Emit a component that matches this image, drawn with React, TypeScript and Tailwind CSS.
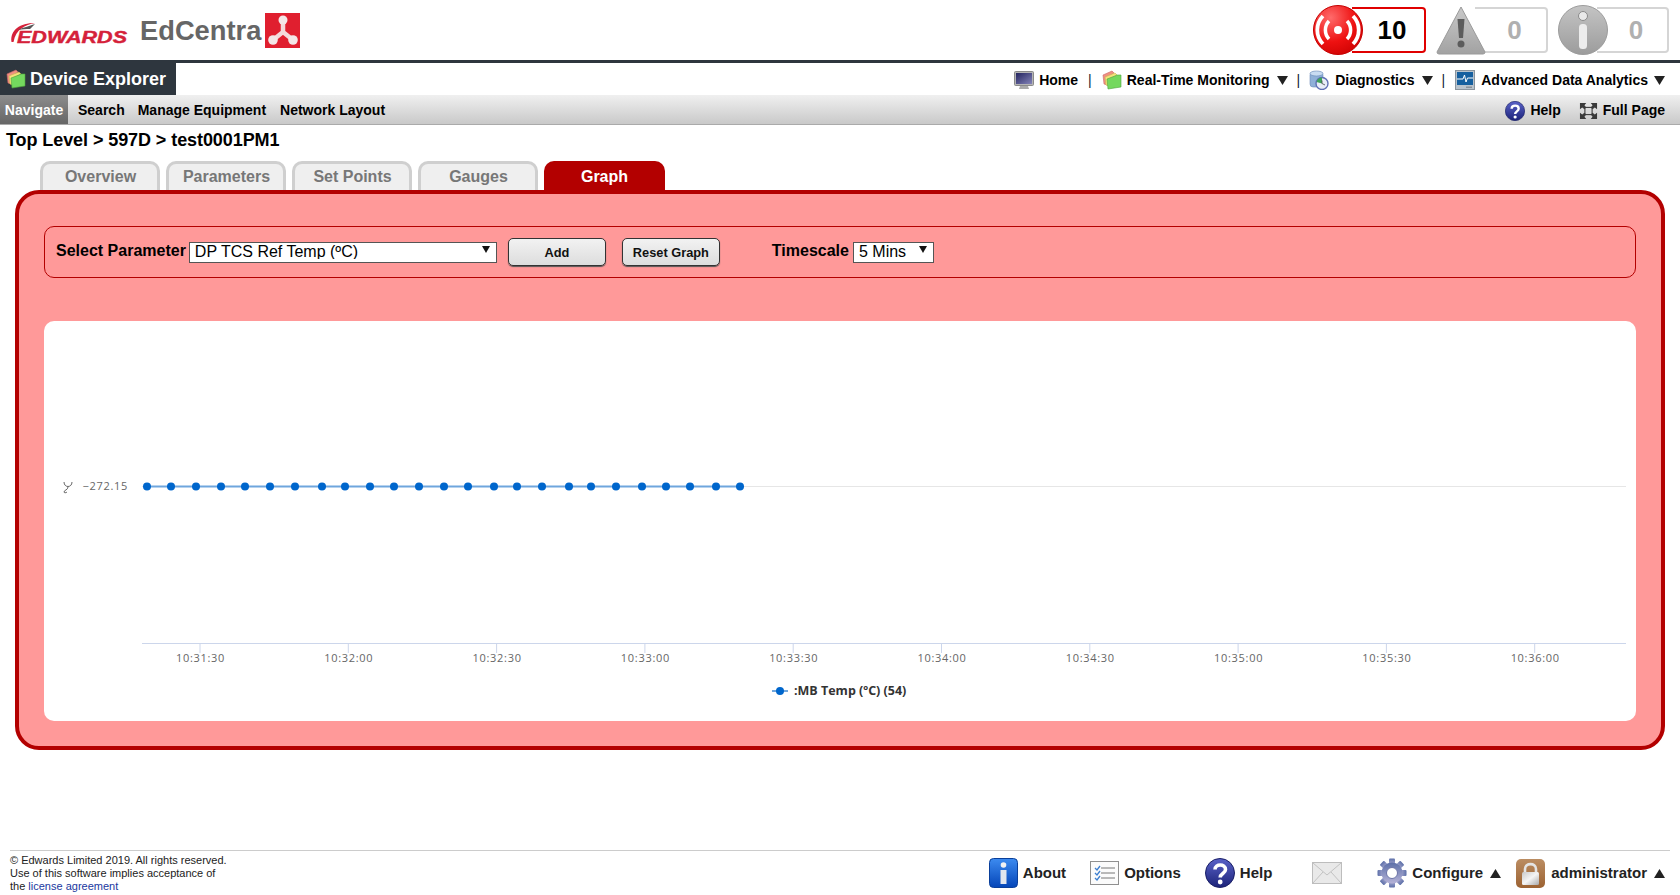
import React from 'react';

const pointXs = [147, 171, 196, 221, 245, 270, 295, 322, 345, 370, 394, 419, 444, 468, 494, 517, 542, 569, 591, 616, 642, 666, 690, 716, 740];
const ticks = ['10:31:30', '10:32:00', '10:32:30', '10:33:00', '10:33:30', '10:34:00', '10:34:30', '10:35:00', '10:35:30', '10:36:00'];
const tabs = ['Overview', 'Parameters', 'Set Points', 'Gauges', 'Graph'];

function Arrow({ up = false }: { up?: boolean }) {
  return (
    <svg width="11" height="9" viewBox="0 0 11 9" className="shrink-0">
      <polygon points={up ? '0,9 11,9 5.5,0' : '0,0 11,0 5.5,9'} fill="#222" />
    </svg>
  );
}

function FoldersIcon({ size = 20 }: { size?: number }) {
  return (
    <svg width={size} height={size} viewBox="0 0 20 20" className="shrink-0">
      <path d="M1 5 L10 1 L12 3 L5 8 L5 15 L2 14 Z" fill="#ef8f80" stroke="#c66" strokeWidth="0.6" />
      <path d="M3 7 L13 3 L15 5 L7 9 L7 16 L4 15 Z" fill="#f3e27c" stroke="#c8b450" strokeWidth="0.6" />
      <path d="M5 9 L13 6 L15 5 L19 5 L19 17 L6 19 Z" fill="#74d85e" stroke="#4ea53c" strokeWidth="0.6" />
    </svg>
  );
}

function MonitorIcon() {
  return (
    <svg width="20" height="20" viewBox="0 0 20 20" className="shrink-0">
      <defs>
        <linearGradient id="mon" x1="0" y1="0" x2="1" y2="1">
          <stop offset="0" stopColor="#23235f" />
          <stop offset="1" stopColor="#8484b8" />
        </linearGradient>
      </defs>
      <rect x="0.5" y="1.5" width="19" height="14" rx="1" fill="#b5b5b5" stroke="#8a8a8a" />
      <rect x="2" y="3" width="16" height="11" fill="url(#mon)" />
      <path d="M6 16 H14 L15 19 H5 Z" fill="#aaa" />
    </svg>
  );
}

function DiagIcon() {
  return (
    <svg width="20" height="20" viewBox="0 0 20 20" className="shrink-0">
      <rect x="1" y="2" width="13" height="15" rx="3" fill="#8fb0d8" stroke="#6c8cb8" strokeWidth="0.6" />
      <ellipse cx="7.5" cy="3.5" rx="6.5" ry="2.5" fill="#c9dcf2" stroke="#6c8cb8" strokeWidth="0.6" />
      <circle cx="13" cy="13.5" r="6" fill="#e8edf7" stroke="#5f6fb5" strokeWidth="1.4" />
      <path d="M7.5 12 A6 6 0 0 1 13 7.5 L13 13.5 Z" fill="#3fa35a" />
      <path d="M13 10.5 V13.5 L16 15" stroke="#444" strokeWidth="0.8" fill="none" />
    </svg>
  );
}

function AnalyticsIcon() {
  return (
    <svg width="20" height="20" viewBox="0 0 20 20" className="shrink-0">
      <rect x="0.5" y="0.5" width="19" height="19" fill="#b9c3cc" stroke="#8b959e" />
      <rect x="2" y="2" width="16" height="13" fill="#16609f" />
      <path d="M2 9 H8 L9.5 5 L11 12 L12.5 8 H18" stroke="#fff" strokeWidth="1" fill="none" />
      <rect x="11" y="16.5" width="6" height="1.5" fill="#88929b" />
    </svg>
  );
}

function HelpIcon({ size = 20 }: { size?: number }) {
  return (
    <svg width={size} height={size} viewBox="0 0 30 30" className="shrink-0">
      <defs>
        <linearGradient id={`hlp${size}`} x1="0" y1="0" x2="0" y2="1">
          <stop offset="0" stopColor="#5a62c8" />
          <stop offset="1" stopColor="#1c2379" />
        </linearGradient>
      </defs>
      <circle cx="15" cy="15" r="14.5" fill={`url(#hlp${size})`} stroke="#1a1f66" />
      <path d="M10 11.5 C10 5.5 20.5 5.5 20.5 11.5 C20.5 15.5 15.2 15.5 15.2 19.5" fill="none" stroke="#fff" strokeWidth="3.6" />
      <circle cx="15.2" cy="24" r="2.4" fill="#fff" />
    </svg>
  );
}

function FullPageIcon() {
  return (
    <svg width="19" height="18" viewBox="0 0 21 20" className="shrink-0">
      <path d="M1 1 H8 L6 3.5 L8 6 L6 8 L3.5 6 L1 8 Z M20 1 H13 L15 3.5 L13 6 L15 8 L17.5 6 L20 8 Z M1 19 H8 L6 16.5 L8 14 L6 12 L3.5 14 L1 12 Z M20 19 H13 L15 16.5 L13 14 L15 12 L17.5 14 L20 12 Z" fill="#3a3a3a" />
      <rect x="6.5" y="6" width="8" height="8" fill="none" stroke="#3a3a3a" strokeWidth="1.2" />
    </svg>
  );
}

function AlarmIcon() {
  return (
    <svg width="50" height="50" viewBox="0 0 50 50">
      <defs>
        <radialGradient id="alarm" cx="0.35" cy="0.25" r="0.9">
          <stop offset="0" stopColor="#ff6b6b" />
          <stop offset="0.55" stopColor="#ee1111" />
          <stop offset="1" stopColor="#c80000" />
        </radialGradient>
      </defs>
      <circle cx="25" cy="25" r="24.5" fill="url(#alarm)" stroke="#c40000" />
      <circle cx="25" cy="25" r="4" fill="#fff" />
      <path d="M16 16 A13 13 0 0 0 16 34 M34 16 A13 13 0 0 1 34 34" fill="none" stroke="#fff" strokeWidth="3.5" />
      <path d="M10 11 A20 20 0 0 0 10 39 M40 11 A20 20 0 0 1 40 39" fill="none" stroke="#fff" strokeWidth="3.8" />
    </svg>
  );
}

function WarnIcon() {
  return (
    <svg width="50" height="50" viewBox="0 0 50 50">
      <defs>
        <linearGradient id="warn" x1="0" y1="0" x2="0" y2="1">
          <stop offset="0" stopColor="#c9c9c9" />
          <stop offset="1" stopColor="#a2a2a2" />
        </linearGradient>
      </defs>
      <path d="M25 2 L49 47 Q49 49 47 49 H3 Q1 49 1 47 Z" fill="url(#warn)" stroke="#9a9a9a" strokeLinejoin="round" />
      <path d="M21.5 14 H28.5 L27 33 H23 Z" fill="#5c5c5c" />
      <circle cx="25" cy="39" r="3.5" fill="#5c5c5c" />
    </svg>
  );
}

function InfoIcon() {
  return (
    <svg width="50" height="50" viewBox="0 0 50 50">
      <defs>
        <linearGradient id="info" x1="0" y1="0" x2="0" y2="1">
          <stop offset="0" stopColor="#c4c4c4" />
          <stop offset="1" stopColor="#9c9c9c" />
        </linearGradient>
      </defs>
      <circle cx="25" cy="25" r="24.5" fill="url(#info)" stroke="#9c9c9c" />
      <circle cx="25" cy="11" r="4.5" fill="#e9e9e9" stroke="#8a8a8a" />
      <rect x="21" y="19" width="8" height="25" rx="3.5" fill="#ececec" />
    </svg>
  );
}

function AboutIcon() {
  return (
    <svg width="29" height="30" viewBox="0 0 29 30" className="shrink-0">
      <defs>
        <linearGradient id="about" x1="0" y1="0" x2="0" y2="1">
          <stop offset="0" stopColor="#3d8bf0" />
          <stop offset="1" stopColor="#0445b8" />
        </linearGradient>
      </defs>
      <rect x="0.5" y="0.5" width="28" height="29" rx="4" fill="url(#about)" stroke="#0a3f9a" />
      <circle cx="14.5" cy="7" r="2.8" fill="#f2f2f2" />
      <rect x="11.5" y="12" width="6" height="14" fill="#e2e6ee" />
    </svg>
  );
}

function OptionsIcon() {
  return (
    <svg width="29" height="24" viewBox="0 0 29 24" className="shrink-0">
      <rect x="0.5" y="0.5" width="28" height="23" fill="#fbfbfb" stroke="#8f8f8f" />
      {[7, 12, 17].map((y) => (
        <g key={y}>
          <path d={`M5 ${y} L7 ${y + 2} L10 ${y - 2}`} fill="none" stroke="#3d7fd0" strokeWidth="1.3" />
          <line x1="11" y1={y} x2="25" y2={y} stroke="#777" />
        </g>
      ))}
    </svg>
  );
}

function MailIcon() {
  return (
    <svg width="30" height="22" viewBox="0 0 30 22" className="shrink-0">
      <rect x="0.5" y="0.5" width="29" height="21" fill="#e9e9e9" stroke="#bdbdbd" />
      <path d="M1 1 L15 13 L29 1 M1 21 L11 10 M29 21 L19 10" fill="none" stroke="#c2c2c2" />
    </svg>
  );
}

function GearIcon() {
  return (
    <svg width="30" height="30" viewBox="0 0 30 30" className="shrink-0">
      <defs>
        <linearGradient id="gear" x1="0" y1="0" x2="0" y2="1">
          <stop offset="0" stopColor="#5c6fa8" />
          <stop offset="1" stopColor="#b6b3d8" />
        </linearGradient>
      </defs>
      <g fill="url(#gear)">
        {[0, 45, 90, 135, 180, 225, 270, 315].map((a) => (
          <rect key={a} x="12" y="0.5" width="6" height="7" rx="1" transform={`rotate(${a} 15 15)`} />
        ))}
        <circle cx="15" cy="15" r="10.5" />
      </g>
      <circle cx="15" cy="15" r="5.5" fill="#fff" stroke="#6c74a8" />
    </svg>
  );
}

function LockIcon() {
  return (
    <svg width="29" height="29" viewBox="0 0 29 29" className="shrink-0">
      <defs>
        <linearGradient id="lockbg" x1="0" y1="0" x2="0" y2="1">
          <stop offset="0" stopColor="#bb8d62" />
          <stop offset="1" stopColor="#9c6232" />
        </linearGradient>
        <linearGradient id="lockbody" x1="0" y1="0" x2="1" y2="1">
          <stop offset="0" stopColor="#c9c9c9" />
          <stop offset="0.5" stopColor="#f5f5f5" />
          <stop offset="1" stopColor="#a9a9a9" />
        </linearGradient>
      </defs>
      <rect width="29" height="29" rx="5" fill="url(#lockbg)" />
      <path d="M9 14 V10 C9 3.5 20 3.5 20 10 V14" fill="none" stroke="#e4e4e4" strokeWidth="2.6" />
      <rect x="6" y="13" width="17" height="13" rx="1.5" fill="url(#lockbody)" />
    </svg>
  );
}

function EdwardsLogo() {
  return (
    <svg width="118" height="28" viewBox="0 0 118 28" className="shrink-0">
      <path d="M1.5 25 C0 13 10 6 25 6 C15 8 6 12 3.5 25 Z" fill="#d5213a" />
      <path d="M8 13 C14 10 20 9 25 7 L20 12 C16 12 12 12 8 13 Z" fill="#555" />
      <text x="7" y="25.5" textLength="110" lengthAdjust="spacingAndGlyphs" stroke="#d5213a" strokeWidth="0.4" className="font-['Liberation_Sans'] text-[16px] font-bold italic fill-[#d5213a]">
        EDWARDS
      </text>
    </svg>
  );
}

function NodeLogo() {
  return (
    <svg width="35" height="35" viewBox="0 0 35 35" className="shrink-0">
      <rect width="35" height="35" fill="#e01f2f" />
      <path d="M18 7 V19 L8 27 M18 19 L28 27" stroke="#f4d9db" strokeWidth="4.5" fill="none" />
      <circle cx="18" cy="7" r="4.5" fill="#f4e6e7" />
      <circle cx="8" cy="27" r="4.8" fill="#f4e6e7" />
      <circle cx="28" cy="27" r="4.8" fill="#f4e6e7" />
    </svg>
  );
}

function GraphChart() {
  const y = 165.5;
  return (
    <svg width="1592" height="400" viewBox="0 0 1592 400" className="block">
      <line x1="98" y1={y} x2="1582" y2={y} stroke="#e6e6e6" />
      <line x1="98" y1="322.5" x2="1582" y2="322.5" stroke="#ccd6eb" />
      {ticks.map((t, i) => {
        const x = 156 + i * 148.3;
        return (
          <g key={t}>
            <line x1={x} y1="322" x2={x} y2="332" stroke="#ccd6eb" />
            <text x={x + 0.5} y="341" textAnchor="middle" className="font-['Open_Sans'] text-[11px] tracking-[0.7px] fill-[#666666]">
              {t}
            </text>
          </g>
        );
      })}
      <path d="M20 161 C20 167 28 167 28 161 M24 166 C24 169 20 169 20 171 C20 172 22 172 23 171" fill="none" stroke="#666" strokeWidth="1" />
      <text x="84" y="169" textAnchor="end" className="font-['Open_Sans'] text-[11px] tracking-[0.7px] fill-[#666666]">
        −272.15
      </text>
      <line x1={pointXs[0] - 44} y1={y} x2={pointXs[24] - 44} y2={y} stroke="#6fa6dd" strokeWidth="2" />
      {pointXs.map((x) => (
        <circle key={x} cx={x - 44} cy={y} r="4" fill="#0066cc" />
      ))}
      <line x1="728" y1="370" x2="744" y2="370" stroke="#6fa6dd" strokeWidth="2" />
      <circle cx="736" cy="370" r="4" fill="#0066cc" />
      <text x="750" y="374" className="font-['Open_Sans'] text-[12.5px] font-bold fill-[#333333]">
        :MB Temp (ºC) (54)
      </text>
    </svg>
  );
}

function SelectBox({ value, className }: { value: string; className: string }) {
  return (
    <div className={`relative mb-[3px] h-[21px] ${className}`}>
      <select
        defaultValue={value}
        className="h-full w-full appearance-none border border-[#555] bg-white pb-[3px] pl-[5px] text-[16px] leading-[17px] text-black outline-none"
      >
        <option>{value}</option>
      </select>
      <svg width="8" height="7" viewBox="0 0 8 7" className="pointer-events-none absolute right-[7px] top-[6px]">
        <polygon points="0,0 8,0 4,7" fill="#111" />
      </svg>
    </div>
  );
}

function NavButton({ label, className }: { label: string; className: string }) {
  return (
    <button className={`h-[28px] rounded-[5px] border border-[#333] bg-linear-to-b from-[#f2f2f2] to-[#dddddd] pt-[2px] text-[12.8px] font-bold text-[#111] shadow-[0_1px_1px_#555] ${className}`}>
      {label}
    </button>
  );
}

function AlertCount({ icon, count, active, width }: { icon: React.ReactNode; count: string; active?: boolean; width: string }) {
  return (
    <div className="flex items-center">
      <div className="relative z-10 h-[50px]">{icon}</div>
      <div
        className={`-ml-[11px] flex h-[46px] items-center justify-center rounded-r-[4px] border-2 border-l-0 pl-[8px] text-[26px] font-bold ${width} ${
          active ? 'border-[#e00000] text-black' : 'border-[#d5d5d5] text-[#b0b0b0]'
        }`}
      >
        {count}
      </div>
    </div>
  );
}

export default function App() {
  return (
    <div className="flex h-[895px] flex-col overflow-hidden bg-white font-['Liberation_Sans',sans-serif] text-black">
      {/* Logo and alarm counters */}
      <div className="flex h-[60px] items-start justify-between pl-[10px] pr-[11px]">
        <div className="flex items-center pt-[13px]">
          <EdwardsLogo />
          <span className="ml-[12px] text-[27.3px] font-bold leading-[34px] text-[#666]">EdCentra</span>
          <div className="ml-[4px]">
            <NodeLogo />
          </div>
        </div>
        <div className="flex gap-[10px] pt-[5px]">
          <AlertCount icon={<AlarmIcon />} count="10" active width="w-[74px]" />
          <AlertCount icon={<WarnIcon />} count="0" width="w-[73px]" />
          <AlertCount icon={<InfoIcon />} count="0" width="w-[72px]" />
        </div>
      </div>

      {/* Module bar */}
      <div className="flex h-[35px] items-start justify-between border-t-[3px] border-[#2e363e]">
        <div className="flex h-[32px] w-[176px] items-center gap-[4px] bg-[#2e363e] pl-[6px] text-[18px] font-bold text-white">
          <FoldersIcon />
          <span>Device Explorer</span>
        </div>
        <div className="flex h-[32px] items-center pr-[15px] pt-[2px] text-[14px] font-bold">
          <MonitorIcon />
          <span className="ml-[5px]">Home</span>
          <span className="mx-[10px] font-normal text-[#123]">|</span>
          <FoldersIcon />
          <span className="ml-[5px]">Real-Time Monitoring</span>
          <span className="ml-[7px]"><Arrow /></span>
          <span className="mx-[9px] font-normal text-[#123]">|</span>
          <DiagIcon />
          <span className="ml-[6px]">Diagnostics</span>
          <span className="ml-[7px]"><Arrow /></span>
          <span className="ml-[9px] mr-[10px] font-normal text-[#123]">|</span>
          <AnalyticsIcon />
          <span className="ml-[6px]">Advanced Data Analytics</span>
          <span className="ml-[6px]"><Arrow /></span>
        </div>
      </div>

      {/* Sub navigation */}
      <div className="flex h-[30px] items-stretch justify-between border-b border-[#aaa] bg-linear-to-b from-[#f0f0f0] to-[#c9c9c9] text-[14px] font-bold">
        <div className="flex items-center">
          <div className="flex h-full w-[68px] items-center justify-center bg-linear-to-b from-[#8d8d8d] to-[#666] pt-[2px] text-white">Navigate</div>
          <span className="ml-[10px] mt-[2px]">Search</span>
          <span className="ml-[13px] mt-[2px]">Manage Equipment</span>
          <span className="ml-[14px] mt-[2px]">Network Layout</span>
        </div>
        <div className="flex items-center pr-[15px] pt-[2px]">
          <HelpIcon />
          <span className="ml-[5px]">Help</span>
          <span className="ml-[18px]"><FullPageIcon /></span>
          <span className="ml-[5px]">Full Page</span>
        </div>
      </div>

      {/* Breadcrumb */}
      <div className="h-[36px] pl-[6px] pt-[5px] text-[18px] font-bold leading-[21px] tracking-[-0.08px]">Top Level &gt; 597D &gt; test0001PM1</div>

      {/* Tabs */}
      <div className="flex h-[29px] gap-[6px] pl-[40px]">
        {tabs.map((tab) =>
          tab === 'Graph' ? (
            <div key={tab} className="flex w-[121px] items-center justify-center rounded-t-[10px] bg-[#b30000] pt-[2px] text-[16px] font-bold text-white">{tab}</div>
          ) : (
            <div key={tab} className="flex w-[120px] items-center justify-center rounded-t-[10px] border-[3px] border-b-0 border-[#cfcfcf] bg-[#efefef] pl-[1px] text-[16px] font-bold text-[#777]">{tab}</div>
          ),
        )}
      </div>

      {/* Graph panel */}
      <div className="mx-[15px] h-[560px] rounded-[24px] border-4 border-[#b30000] bg-[#ff9999] px-[25px] pb-[25px] pt-[32px]">
        <div className="flex h-[52px] items-center rounded-[10px] border border-[#b30000] pl-[11px]">
          <span className="mb-[2px] text-[16px] font-bold">Select Parameter</span>
          <SelectBox value="DP TCS Ref Temp (ºC)" className="ml-[3px] w-[308px]" />
          <NavButton label="Add" className="ml-[11px] w-[98px]" />
          <NavButton label="Reset Graph" className="ml-[16px] w-[98px]" />
          <span className="mb-[2px] ml-[52px] text-[16px] font-bold">Timescale</span>
          <SelectBox value="5 Mins" className="ml-[4px] w-[81px]" />
        </div>
        <div className="mt-[43px] h-[400px] overflow-hidden rounded-[10px] bg-white">
          <GraphChart />
        </div>
      </div>

      {/* Footer */}
      <div className="mx-[10px] mt-auto flex h-[45px] items-start justify-between border-t border-[#ccc]">
        <div className="pt-[3px] text-[11px] leading-[13px] text-[#222]">
          <div>© Edwards Limited 2019. All rights reserved.</div>
          <div>Use of this software implies acceptance of</div>
          <div>the <span className="text-[#2038a0]">license agreement</span></div>
        </div>
        <div className="flex h-full items-center pr-[5px] text-[15px] font-bold text-[#222]">
          <AboutIcon />
          <span className="ml-[5px]">About</span>
          <span className="ml-[24px]"><OptionsIcon /></span>
          <span className="ml-[5px]">Options</span>
          <span className="ml-[24px]"><HelpIcon size={30} /></span>
          <span className="ml-[5px]">Help</span>
          <span className="ml-[40px]"><MailIcon /></span>
          <span className="ml-[35px]"><GearIcon /></span>
          <span className="ml-[5px]">Configure</span>
          <span className="ml-[7px]"><Arrow up /></span>
          <span className="ml-[15px]"><LockIcon /></span>
          <span className="ml-[6px]">administrator</span>
          <span className="ml-[7px]"><Arrow up /></span>
        </div>
      </div>
    </div>
  );
}
